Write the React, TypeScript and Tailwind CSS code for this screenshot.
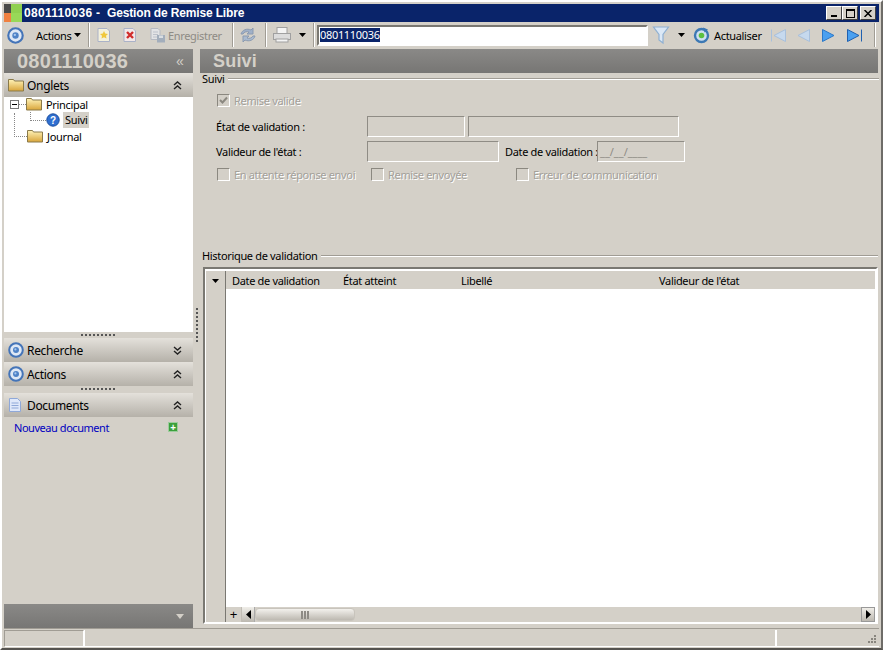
import React from "react";

const Target = ({ size = 16 }: { size?: number }) => (
  <svg width={size} height={size} viewBox="0 0 16 16" className="shrink-0">
    <circle cx="8" cy="8" r="6.8" fill="#dfe8f5" stroke="#4474b8" strokeWidth="2" />
    <circle cx="8" cy="8" r="3" fill="#4f82c6" />
    <circle cx="7.4" cy="7.4" r="1.1" fill="#a9c8ee" />
  </svg>
);

const Folder = ({ w = 16, h = 14 }: { w?: number; h?: number }) => (
  <svg width={w} height={h} viewBox="0 0 16 14" className="shrink-0">
    <defs>
      <linearGradient id="fg" x1="0" y1="0" x2="0" y2="1">
        <stop offset="0" stopColor="#fff3b8" />
        <stop offset="1" stopColor="#d9a53a" />
      </linearGradient>
    </defs>
    <path d="M0.5 3V1.5h5l1 1.5h9v10h-15z" fill="url(#fg)" stroke="#8a7a4a" strokeWidth="1" />
  </svg>
);

const Chevrons = ({ up, color = "#222" }: { up: boolean; color?: string }) => (
  <svg width="9" height="9" viewBox="0 0 9 9">
    {up ? (
      <path d="M1 4l3.5-3L8 4M1 8l3.5-3L8 8" fill="none" stroke={color} strokeWidth="1.4" />
    ) : (
      <path d="M1 1l3.5 3L8 1M1 5l3.5 3L8 5" fill="none" stroke={color} strokeWidth="1.4" />
    )}
  </svg>
);

const Caret = ({ className = "" }: { className?: string }) => (
  <svg width="7" height="4" viewBox="0 0 7 4" className={`shrink-0 ${className}`}>
    <path d="M0 0h7L3.5 4z" fill="#000" />
  </svg>
);

const Sep = () => <div className="h-[24px] w-[2px] border-l border-[#a09c94] bg-white mx-[3px] shrink-0" />;

const Nav = ({ d, fill, stroke }: { d: string; fill: string; stroke: string }) => (
  <svg width="17" height="15" viewBox="0 0 17 15" className="shrink-0">
    <path d={d} fill={fill} stroke={stroke} strokeWidth="1" />
  </svg>
);

const SectionHeader = ({ icon, label, up }: { icon: React.ReactNode; label: string; up: boolean }) => (
  <div className="h-[24px] flex items-center pl-[4px] pr-[11px] bg-gradient-to-b from-[#e4e1db] to-[#b5b1a9] text-[12px] text-black shrink-0">
    <div className="w-[19px] flex items-center">{icon}</div>
    <span className="flex-1">{label}</span>
    <Chevrons up={up} />
  </div>
);

const Grip = () => (
  <div className="h-[6px] flex items-center justify-center shrink-0">
    <div className="w-[35px] h-[2px] bg-[repeating-linear-gradient(90deg,#555_0,#555_2px,transparent_2px,transparent_4px)]" />
  </div>
);

const Check = ({ label, checked = false, className = "" }: { label: string; checked?: boolean; className?: string }) => (
  <div className={`flex items-center gap-[4px] text-[#a3a09a] [text-shadow:1px_1px_0_#fff] whitespace-nowrap ${className}`}>
    <div className="w-[13px] h-[13px] border border-[#8b8880] border-r-white border-b-white flex items-center justify-center shrink-0">
      {checked && (
        <svg width="9" height="9" viewBox="0 0 9 9">
          <path d="M1 4l2.5 2.5L8 1.5" fill="none" stroke="#8b8880" strokeWidth="2" />
        </svg>
      )}
    </div>
    <span>{label}</span>
  </div>
);

const Field = ({ className = "", children }: { className?: string; children?: React.ReactNode }) => (
  <div className={`h-[21px] border border-[#8f8c85] border-r-white border-b-white flex items-center shrink-0 ${className}`}>{children}</div>
);

const Group = ({ label, className = "" }: { label: string; className?: string }) => (
  <div className={`flex items-center h-[13px] pl-[2px] text-black ${className}`}>
    <span>{label}</span>
    <div className="flex-1 ml-[4px] h-[2px] border-t border-[#a09c94] border-b border-b-white" />
  </div>
);

export default function App() {
  return (
    <div className="w-[883px] h-[650px] bg-[#d4d0c8] flex flex-col overflow-hidden border-t-2 border-l-2 border-white border-r-2 border-r-[#6e6c68] border-b-2 border-b-[#55534f] p-[2px] pb-0 text-[11px] leading-[13px] font-['Noto_Sans','Liberation_Sans',sans-serif] text-black tracking-[-0.33px]">
      {/* Title bar */}
      <div className="h-[18px] bg-[#0a246a] flex items-center shrink-0 text-white font-['Liberation_Sans',sans-serif] font-bold text-[12px] tracking-normal">
        <div className="w-[18px] h-[18px] flex flex-col shrink-0">
          <div className="flex h-[9px]">
            <div className="w-[7px] bg-[#4a4a4a]" />
            <div className="flex-1 bg-[#90d050]" />
          </div>
          <div className="flex flex-1">
            <div className="w-[7px] bg-[#f08040]" />
            <div className="flex-1 bg-[#98d858]" />
          </div>
        </div>
        <span className="ml-[2px] w-[83px] whitespace-pre tracking-[0.3px]">0801110036 -</span>
        <span className="whitespace-pre tracking-[-0.15px]">Gestion de Remise Libre</span>
        <div className="ml-auto flex items-center mr-[3px]">
          {["min", "max"].map((k) => (
            <div key={k} className="w-[16px] h-[14px] bg-[#d4d0c8] border border-white border-r-[#404040] border-b-[#404040] flex items-center justify-center">
              {k === "min" ? (
                <div className="w-[6px] h-[2px] bg-black mt-[6px]" />
              ) : (
                <div className="w-[9px] h-[9px] border border-black border-t-2" />
              )}
            </div>
          ))}
          <div className="ml-[2px] w-[16px] h-[14px] bg-[#d4d0c8] border border-white border-r-[#404040] border-b-[#404040] flex items-center justify-center">
            <svg width="8" height="7" viewBox="0 0 8 7">
              <path d="M0.5 0L7.5 7M7.5 0L0.5 7" stroke="#000" strokeWidth="1.5" />
            </svg>
          </div>
        </div>
      </div>

      {/* Toolbar */}
      <div className="h-[26px] flex items-center shrink-0 text-[11px] pl-[3px]">
        <Target size={17} />
        <div className="ml-[12px] flex items-center gap-[2px] w-[47px]">
          <span>Actions</span>
          <Caret />
        </div>
        <div className="w-[2px]" />
        <Sep />
        <svg width="16" height="16" viewBox="0 0 16 16" className="ml-[3px] shrink-0">
          <path d="M2 1.5h9l2.5 2.5v10.5H2z" fill="#f4f1dc" stroke="#aab2c8" />
          <path d="M8 4l1.2 2.6 2.8.3-2 1.9.5 2.8L8 10.3l-2.5 1.3.5-2.8-2-1.9 2.8-.3z" fill="#f0c83c" />
        </svg>
        <svg width="16" height="16" viewBox="0 0 16 16" className="ml-[10px] shrink-0">
          <path d="M2 1.5h9l2.5 2.5v10.5H2z" fill="#f2e8e8" stroke="#aab2c8" />
          <path d="M5 5l6 6M11 5l-6 6" stroke="#d02c2c" strokeWidth="2.4" />
        </svg>
        <svg width="17" height="16" viewBox="0 0 17 16" className="ml-[11px] shrink-0 opacity-70">
          <path d="M2 1.5h7l2 2v9H2z" fill="#e8ecf2" stroke="#a8b0c0" />
          <path d="M4 5h5M4 7.5h5M4 10h5" stroke="#b4bccc" />
          <rect x="8" y="8" width="8" height="7.5" fill="#8fa0b8" />
          <rect x="10" y="8.5" width="4" height="2.5" fill="#dde4ee" />
        </svg>
        <span className="ml-[2px] text-[#8e8b85] w-[58px]">Enregistrer</span>
        <div className="w-[3px]" />
        <Sep />
        <svg width="20" height="18" viewBox="0 0 20 18" className="ml-[1px] shrink-0">
          <path d="M3 8c1-4 6-6 10-4l2-2v6h-6l2-2c-2-1-5 0-6 2z" fill="#9fb0c8" stroke="#8b9ab0" />
          <path d="M17 10c-1 4-6 6-10 4l-2 2v-6h6l-2 2c2 1 5 0 6-2z" fill="#a9bad0" stroke="#8b9ab0" />
        </svg>
        <div className="w-[4px]" />
        <Sep />
        <svg width="20" height="18" viewBox="0 0 20 18" className="ml-[2px] shrink-0">
          <rect x="5" y="1.5" width="10" height="6" fill="#f4f4f4" stroke="#a0a0a0" />
          <rect x="1.5" y="7.5" width="17" height="6" fill="#dcdcdc" stroke="#a0a0a0" />
          <rect x="4" y="13" width="12" height="3" fill="#f4f4f4" stroke="#a0a0a0" />
        </svg>
        <Caret className="ml-[7px]" />
        <div className="w-[4px]" />
        <Sep />
        <div className="ml-[-1px] w-[331px] h-[21px] bg-white border-2 border-[#7a7872] border-r-white border-b-white flex items-center pl-[1px] shrink-0">
          <span className="bg-[#0a246a] text-white leading-[14px]">0801110036</span>
        </div>
        <svg width="18" height="20" viewBox="0 0 18 20" className="ml-[4px] shrink-0">
          <path d="M1.5 2h15L11 9.5V18l-4-3V9.5z" fill="#dbe8f6" stroke="#8fb0d2" strokeWidth="1.2" />
        </svg>
        <Caret className="ml-[8px]" />
        <svg width="17" height="17" viewBox="0 0 17 17" className="ml-[8px] shrink-0">
          <circle cx="8.5" cy="8.5" r="6.5" fill="#cfe0f0" stroke="#3c78b4" strokeWidth="2.4" />
          <circle cx="8.5" cy="8.5" r="2.8" fill="#5cc040" />
          <path d="M10 0.5l5 2-3.5 3z" fill="#3c78b4" />
        </svg>
        <span className="ml-[4px] w-[47px] whitespace-nowrap">Actualiser</span>
        <div className="w-[9px]" />
        <Nav d="M1.5 1.5v12M15.5 1.5v12L4 7.5z" fill="#c6d9ee" stroke="#a8c0dc" />
        <div className="w-[7px]" />
        <Nav d="M15.5 1.5v12L4 7.5z" fill="#c6d9ee" stroke="#a8c0dc" />
        <div className="w-[8px]" />
        <Nav d="M3.5 1.5v12L15 7.5z" fill="#4aa0f0" stroke="#2a78c8" />
        <div className="w-[10px]" />
        <Nav d="M15.5 1.5v12M1.5 1.5v12L13 7.5z" fill="#4aa0f0" stroke="#1f60b0" />
        <div className="w-[8px]" />
        <Sep />
      </div>

      {/* Body */}
      <div className="flex-1 flex min-h-0">
        {/* Left panel */}
        <div className="w-[189px] flex flex-col shrink-0 mt-[1px]">
          <div className="h-[24px] flex items-center pl-[13px] pr-[9px] bg-gradient-to-b from-[#8a8987] to-[#777674] text-[#d4d0c8] font-['Liberation_Sans',sans-serif] font-bold text-[20px] tracking-[0.2px] shrink-0">
            <span className="flex-1">0801110036</span>
            <span className="text-[14px] font-normal">«</span>
          </div>
          <SectionHeader icon={<Folder />} label="Onglets" up />
          <div className="h-[235px] bg-white shrink-0 pl-[6px]">
            <div className="flex items-center h-[16px] mt-[-1px]">
              <div className="w-[9px] h-[9px] border border-[#777] flex items-center justify-center shrink-0">
                <div className="w-[5px] h-[1px] bg-black" />
              </div>
              <div className="w-[7px] border-t border-dotted border-[#888]" />
              <Folder />
              <span className="ml-[4px]">Principal</span>
            </div>
            <div className="flex items-center h-[16px]">
              <div className="w-[12px] h-full" />
              <div className="w-[16px] h-[9px] mt-[-8px] ml-[8px] border-l border-b border-dotted border-[#888] shrink-0" />
              <svg width="14" height="14" viewBox="0 0 14 14" className="shrink-0">
                <circle cx="7" cy="7" r="6.2" fill="#2f6fd0" stroke="#1c4fa0" />
                <text x="7" y="10.5" textAnchor="middle" fontSize="10" fontWeight="700" fill="#fff" fontFamily="Liberation Sans">?</text>
              </svg>
              <span className="ml-[3px] px-[2px] bg-[#d4d0c8] h-[16px] leading-[16px]">Suivi</span>
            </div>
            <div className="flex items-center h-[16px]">
              <div className="w-[4px]" />
              <div className="w-[13px] h-[24px] mt-[-22px] border-l border-b border-dotted border-[#888]" />
              <Folder />
              <span className="ml-[4px]">Journal</span>
            </div>
          </div>
          <Grip />
          <SectionHeader icon={<Target />} label="Recherche" up={false} />
          <SectionHeader icon={<Target />} label="Actions" up />
          <Grip />
          <div className="h-[1px]" />
          <SectionHeader
            icon={
              <svg width="14" height="16" viewBox="0 0 14 16">
                <path d="M1.5 1.5h8l3 3v10h-11z" fill="#dfe8fa" stroke="#8fa8d8" />
                <path d="M3.5 6h7M3.5 8.5h7M3.5 11h7" stroke="#8fa8d8" />
              </svg>
            }
            label="Documents"
            up
          />
          <div className="flex-1 min-h-0 flex pt-[4px] pl-[10px] pr-[15px]">
            <span className="text-[#0000c0] flex-1 tracking-[-0.45px]">Nouveau document</span>
            <div className="w-[10px] h-[10px] bg-[#3ca03c] flex items-center justify-center mt-[1px] border border-[#9ccc9c]">
              <span className="text-white text-[10px] leading-[8px] font-bold">+</span>
            </div>
          </div>
          <div className="h-[24px] bg-gradient-to-b from-[#8a8987] to-[#777674] flex items-center justify-end pr-[9px] shrink-0">
            <svg width="8" height="5" viewBox="0 0 8 5">
              <path d="M0 0h8L4 5z" fill="#d4d0c8" />
            </svg>
          </div>
        </div>

        {/* Splitter */}
        <div className="w-[7px] flex items-center justify-center shrink-0">
          <div className="w-[2px] h-[36px] bg-[repeating-linear-gradient(180deg,#555_0,#555_2px,transparent_2px,transparent_4px)] mt-[-24px]" />
        </div>

        {/* Right panel */}
        <div className="flex-1 flex flex-col min-w-0 pr-[1px]">
          <div className="mt-[1px] h-[24px] bg-gradient-to-b from-[#8a8987] to-[#777674] text-[#d4d0c8] font-['Liberation_Sans',sans-serif] font-bold text-[18px] pl-[13px] flex items-center shrink-0 tracking-[0.2px]">
            Suivi
          </div>
          <div className="mr-[-1px] h-[176px] shrink-0">
            <Group label="Suivi" className="mt-[-1px]" />
            <Check label="Remise valide" checked className="ml-[17px] mt-[9px]" />
            <div className="flex items-center ml-[16px] mt-[9px]">
              <span className="w-[151px]">État de validation :</span>
              <Field className="w-[98px]" />
              <Field className="w-[211px] ml-[3px]" />
            </div>
            <div className="flex items-center ml-[16px] mt-[4px]">
              <span className="w-[151px]">Valideur de l'état :</span>
              <Field className="w-[132px]" />
              <span className="ml-[6px] w-[92px] whitespace-nowrap">Date de validation :</span>
              <Field className="w-[88px] pl-[2px] text-[#8e8b85] tracking-normal">__/__/____</Field>
            </div>
            <div className="flex items-center ml-[17px] mt-[6px]">
              <Check label="En attente réponse envoi" className="w-[154px]" />
              <Check label="Remise envoyée" className="w-[145px]" />
              <Check label="Erreur de communication" />
            </div>
          </div>
          <Group label="Historique de validation" />
          <div className="mt-[5px] ml-[3px] flex-1 min-h-0 mb-[4px] border-2 border-[#7a7872] border-r-white border-b-white flex flex-col bg-white">
            <div className="flex-1 min-h-0 flex mt-[2px] ml-[1px] mr-[1px]">
              <div className="w-[20px] bg-[#d4d0c8] border-r border-[#7a7872] shrink-0 flex justify-center pt-[8px]">
                <Caret />
              </div>
              <div className="flex-1 flex flex-col min-w-0">
                <div className="h-[18px] bg-[#d4d0c8] flex items-center shrink-0">
                  <span className="ml-[6px] w-[111px]">Date de validation</span>
                  <span className="w-[118px]">État atteint</span>
                  <span className="w-[198px]">Libellé</span>
                  <span>Valideur de l'état</span>
                </div>
                <div className="flex-1 min-h-0" />
                <div className="h-[15px] bg-[#d4d0c8] flex items-center shrink-0">
                  <div className="w-[16px] h-full flex items-center justify-center border-r border-[#c0bcb4]">
                    <span className="font-['Liberation_Sans',sans-serif] text-[13px] leading-none">+</span>
                  </div>
                  <div className="w-[13px] h-[15px] flex items-center justify-center bg-gradient-to-b from-[#f0eee9] to-[#bcb8b0] border-r border-[#aaa]">
                    <svg width="5" height="9" viewBox="0 0 5 9">
                      <path d="M5 0v9L0 4.5z" fill="#000" />
                    </svg>
                  </div>
                  <div className="w-[100px] h-[13px] rounded-[4px] bg-gradient-to-b from-[#f3f1ed] to-[#bdb9b1] flex items-center justify-center gap-[1px] border border-[#c8c4bc]">
                    <div className="w-[2px] h-[8px] bg-[#8e8b85]" />
                    <div className="w-[2px] h-[8px] bg-[#8e8b85]" />
                    <div className="w-[2px] h-[8px] bg-[#8e8b85]" />
                  </div>
                  <div className="ml-auto w-[14px] h-[15px] flex items-center justify-center bg-gradient-to-b from-[#f0eee9] to-[#bcb8b0] border border-[#999]">
                    <svg width="5" height="9" viewBox="0 0 5 9">
                      <path d="M0 0v9L5 4.5z" fill="#000" />
                    </svg>
                  </div>
                </div>
              </div>
            </div>
          </div>
        </div>
      </div>

      {/* Status bar */}
      <div className="h-[20px] shrink-0 border-t border-[#a09c94] flex pt-[1px]">
        <div className="w-[80px] h-[17px] border border-[#a09c94] border-r-white border-b-white" />
        <div className="flex-1 h-[17px] border-b border-white border-l border-[#a09c94]" />
        <div className="w-[104px] h-[17px] border-l-2 border-white border-b relative">
          <svg width="12" height="12" viewBox="0 0 12 12" className="absolute right-[2px] bottom-[1px]">
            <path d="M9 2h2v2H9zM6 5h2v2H6zM9 5h2v2H9zM3 8h2v2H3zM6 8h2v2H6zM9 8h2v2H9z" fill="#88857e" />
          </svg>
        </div>
      </div>
    </div>
  );
}
